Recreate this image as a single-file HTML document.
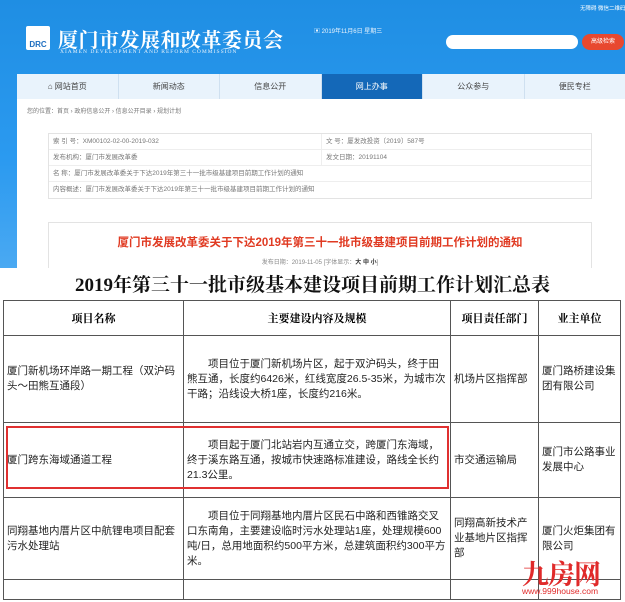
<!DOCTYPE html>
<html><head><meta charset="utf-8"><style>
*{margin:0;padding:0;box-sizing:border-box}
body{width:625px;height:602px;background:#fff;position:relative;overflow:hidden;font-family:"Liberation Sans","Noto Sans CJK SC",sans-serif;}
.a{position:absolute;white-space:nowrap}
.hdr{left:0;top:0;width:625px;height:268px;background:linear-gradient(#1f8ee3,#2b9af0 60%,#4aa9f2);}
.nav{left:17px;top:74px;width:608px;height:25px;background:#e9f3fc;display:flex}
.nav div{flex:1;font-size:8px;color:#444;text-align:center;line-height:25px;border-right:1px solid #cfe0f0}
.nav .on{background:#1468b8;color:#fff}
.content{left:17px;top:99px;width:608px;height:169px;background:#fff}
.info{left:48px;top:133px;width:544px;border:1px solid #e3e3e3;font-size:6.5px;color:#777}
.info div{height:16px;line-height:16px;border-bottom:1px solid #eee;padding-left:4px;position:relative}
td{border:1px solid #555;font-size:10.5px;color:#222;vertical-align:middle;padding:2px 3px;line-height:15px;font-family:"Liberation Sans","Noto Sans CJK SC",sans-serif}
th{border:1px solid #555;font-size:11px;font-weight:bold;font-family:"Liberation Serif","Noto Serif CJK SC",serif}
</style></head><body>
<div class="a hdr"></div>
<div class="a" style="left:580px;top:4px;font-size:5.5px;color:#fff">无障碍 微信二维码</div>
<div class="a" style="left:26px;top:26px;width:24px;height:24px;background:#fff;border-radius:2px"><div style="font:bold 8px 'Liberation Sans';color:#1f6fc0;margin-top:14px;text-align:center">DRC</div></div>
<div class="a" style="left:58px;top:24px;font-size:20px;font-weight:bold;color:#fff;font-family:'Liberation Serif','Noto Serif CJK SC',serif;letter-spacing:0.5px">厦门市发展和改革委员会</div>
<div class="a" style="left:60px;top:49px;font-size:5.5px;color:#e6f1fb;letter-spacing:1px;font-family:'Liberation Serif',serif">XIAMEN DEVELOPMENT AND REFORM COMMISSION</div>
<div class="a" style="left:314px;top:26px;font-size:6px;color:#eaf4fd">▣ 2019年11月6日 星期三</div>
<div class="a" style="left:446px;top:35px;width:132px;height:14px;background:#fff;border-radius:8px"></div>
<div class="a" style="left:582px;top:34px;width:42px;height:16px;background:#e8482f;border-radius:8px;font-size:6px;color:#fff;line-height:16px;text-align:center">高级检索</div>
<div class="a nav"><div>⌂ 网站首页</div><div>新闻动态</div><div>信息公开</div><div class="on">网上办事</div><div>公众参与</div><div style="border:0">便民专栏</div></div>
<div class="a content"></div>
<div class="a" style="left:27px;top:106px;font-size:6px;color:#777">您的位置：首页 › 政府信息公开 › 信息公开目录 › 规划计划</div>
<div class="a info">
<div>索 引 号：XM00102-02-00-2019-032<span class="a" style="left:272px;top:0;border-left:1px solid #eee;padding-left:4px">文 号：厦发改投资〔2019〕587号</span></div>
<div>发布机构：厦门市发展改革委<span class="a" style="left:272px;top:0;border-left:1px solid #eee;padding-left:4px">发文日期：20191104</span></div>
<div>名 称：厦门市发展改革委关于下达2019年第三十一批市级基建项目前期工作计划的通知</div>
<div style="border:0">内容概述：厦门市发展改革委关于下达2019年第三十一批市级基建项目前期工作计划的通知</div>
</div>
<div class="a" style="left:48px;top:222px;width:544px;height:46px;border:1px solid #e3e3e3;border-bottom:0"></div>
<div class="a" style="left:48px;top:234px;width:544px;text-align:center;font-size:11.5px;font-weight:bold;color:#e03a22">厦门市发展改革委关于下达2019年第三十一批市级基建项目前期工作计划的通知</div>
<div class="a" style="left:48px;top:257px;width:544px;text-align:center;font-size:6px;color:#888">发布日期：2019-11-05 [字体显示：<b style="color:#333">大 中 小</b>]</div>
<div class="a" style="left:0;top:270px;width:625px;text-align:center;font-size:19px;font-weight:bold;color:#111;font-family:'Liberation Serif','Noto Serif CJK SC',serif">2019年第三十一批市级基本建设项目前期工作计划汇总表</div>
<table class="a" style="left:3px;top:300px;width:617px;border-collapse:collapse;table-layout:fixed;white-space:normal">
<col style="width:180px"><col style="width:267px"><col style="width:88px"><col style="width:82px">
<tr style="height:35px"><th>项目名称</th><th>主要建设内容及规模</th><th>项目责任部门</th><th>业主单位</th></tr>
<tr style="height:87px"><td>厦门新机场环岸路一期工程（双沪码头～田熊互通段）</td><td>　　项目位于厦门新机场片区，起于双沪码头，终于田熊互通，长度约6426米，红线宽度26.5-35米，为城市次干路；沿线设大桥1座，长度约216米。</td><td>机场片区指挥部</td><td>厦门路桥建设集团有限公司</td></tr>
<tr style="height:75px"><td>厦门跨东海域通道工程</td><td>　　项目起于厦门北站岩内互通立交，跨厦门东海域，终于溪东路互通，按城市快速路标准建设，路线全长约21.3公里。</td><td>市交通运输局</td><td>厦门市公路事业发展中心</td></tr>
<tr style="height:82px"><td>同翔基地内厝片区中航锂电项目配套污水处理站</td><td>　　项目位于同翔基地内厝片区民石中路和西锥路交叉口东南角，主要建设临时污水处理站1座，处理规模600吨/日，总用地面积约500平方米，总建筑面积约300平方米。</td><td>同翔高新技术产业基地片区指挥部</td><td>厦门火炬集团有限公司</td></tr>
<tr style="height:20px"><td></td><td></td><td></td><td></td></tr>
</table>
<div class="a" style="left:6px;top:426px;width:443px;height:63px;border:2px solid #e03030"></div>
<div class="a" style="left:522px;top:553px;font-size:27px;font-weight:bold;color:#e02a2a;font-family:'Liberation Serif','Noto Serif CJK SC',serif;letter-spacing:-1px">九房网</div>
<div class="a" style="left:522px;top:586px;font-size:8.5px;color:#e02a2a">www.999house.com</div>
</body></html>
